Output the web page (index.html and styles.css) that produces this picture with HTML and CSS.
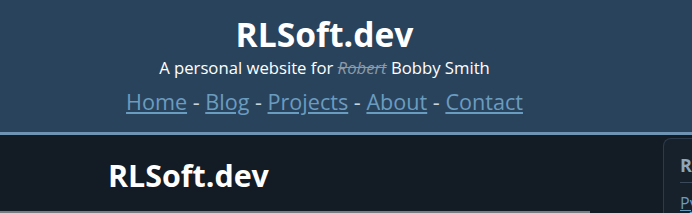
FILE: index.html
```html
<!DOCTYPE html>
<html lang="en">
<head>
    <meta charset="UTF-8">
    <title>RLSoft.dev</title>
    <link rel="stylesheet" href="styles.css">
</head>
<body>
    <header class="site-header">
        <h1 class="site-title">RLSoft.dev</h1>
        <p class="tagline">A personal website for <s>Robert</s> Bobby Smith</p>
        <nav class="site-nav">
            <a href="#">Home</a> - <a href="#">Blog</a> - <a href="#">Projects</a> - <a href="#">About</a> - <a href="#">Contact</a>
        </nav>
    </header>

    <div class="page">
        <main class="content">
            <h1 class="post-title">RLSoft.dev</h1>
            <div class="post-rule"></div>
        </main>
        <aside class="sidebar">
            <h3>Recent</h3>
            <hr>
            <a href="#">Python</a>
        </aside>
    </div>
</body>
</html>
```

FILE: styles.css
```css
* {
    margin: 0;
    padding: 0;
    box-sizing: border-box;
}

body {
    font-family: "Open Sans", "Noto Sans", sans-serif;
    background: #131b24;
    color: #ffffff;
    height: 213px;
    overflow: hidden;
}

a {
    color: #6a9cc0;
}

/* Header */
.site-header {
    background: #2a435c;
    border-bottom: 3px solid #6f93b3;
    text-align: center;
    padding: 12px 43px 0 0;
    height: 135px;
}

.site-title {
    font-size: 33.6px;
    font-weight: 700;
    line-height: 44px;
}

.tagline {
    font-size: 16.7px;
    line-height: 22px;
    margin-top: 1px;
}

.tagline s {
    font-style: italic;
    color: #8a9aa8;
}

.site-nav {
    font-size: 21.6px;
    line-height: 30px;
    margin-top: 8px;
    color: #c8d4de;
}

/* Main area */
.page {
    display: flex;
    justify-content: space-between;
    height: 78px;
}

.content {
    width: 590px;
    padding: 22px 0 0 108px;
    display: flex;
    flex-direction: column;
    justify-content: space-between;
}

.post-title {
    font-size: 30.4px;
    font-weight: 700;
    line-height: 38px;
}

.post-rule {
    border-top: 2px solid #777c80;
    margin-left: -108px;
}

.sidebar {
    margin-top: 3px;
    width: 29px;
    background: #17212c;
    border: 1px solid #2c3b4b;
    border-right: none;
    border-bottom: none;
    border-top-left-radius: 8px;
    padding: 14px 0 0 16px;
    overflow: hidden;
    white-space: nowrap;
}

.sidebar h3 {
    font-size: 18px;
    color: #8ea6bb;
    line-height: 24px;
}

.sidebar hr {
    border: none;
    border-top: 1px solid #3a4a5a;
    margin: 5px 0 9px;
}

.sidebar a {
    font-size: 16px;
    line-height: 20px;
}
```
